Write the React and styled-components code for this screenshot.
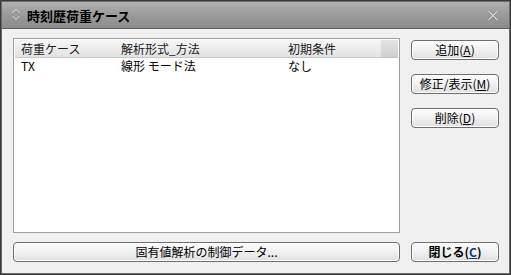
import styled, { createGlobalStyle } from "styled-components"

const GlobalStyle = createGlobalStyle`
    html, body {
        margin: 0;
        padding: 0;
        background: #f0f0f0;
    }
    * {
        box-sizing: border-box;
    }
`

const Window = styled.div`
    width: 511px;
    height: 275px;
    display: flex;
    flex-direction: column;
    background: #f0f0f0;
    border: 1px solid #3a3a3a;
    box-shadow: inset 0 0 0 1px #6a6a6a;
    font-family: "Noto Sans CJK JP", "Liberation Sans", sans-serif;
    font-size: 12px;
    color: #000;
`

const TitleBar = styled.div`
    height: 27px;
    flex-shrink: 0;
    display: flex;
    align-items: center;
    padding: 0 10px 0 9px;
    background: linear-gradient(#b0b0b0 0%, #9c9c9c 45%, #8c8c8c 100%);
    border-bottom: 1px solid #5e5e5e;
    margin: 1px 1px 0 1px;
`

const Title = styled.span`
    font-weight: 700;
    font-size: 13px;
    margin-left: 6px;
    letter-spacing: 0;
    flex: 1;
`

const Body = styled.div`
    flex: 1;
    display: grid;
    grid-template-columns: 387px 88px;
    grid-template-rows: 195px 21px;
    column-gap: 11px;
    row-gap: 9px;
    padding: 9px 10px 0 12px;
`

const ListBox = styled.div`
    background: #fff;
    border: 1px solid #a0a0a0;
    padding: 1px;
    display: flex;
    flex-direction: column;
`

const HeaderRow = styled.div`
    display: grid;
    grid-template-columns: 100px 167px 99px 17px;
    height: 17px;
`

const HeaderCell = styled.div`
    padding-left: 6px;
    line-height: 17px;
    color: #1a1a1a;
    background: ${p => p.$blank
        ? "linear-gradient(#e4e4e4, #cfcfcf)"
        : "linear-gradient(#f6f6f6, #e2e2e2)"};
    border-bottom: 1px solid #c8c8c8;
    white-space: nowrap;
`

const Row = styled.div`
    display: grid;
    grid-template-columns: 100px 167px 99px;
    height: 17px;
`

const Cell = styled.div`
    padding-left: 6px;
    line-height: 17px;
    white-space: nowrap;
`

const ButtonColumn = styled.div`
    display: flex;
    flex-direction: column;
    gap: 14px;
    padding-top: 2px;
`

const Button = styled.button`
    height: 20px;
    width: 100%;
    padding: 0;
    font-family: inherit;
    font-size: 12px;
    font-weight: ${p => (p.$bold ? 700 : 400)};
    color: #000;
    border: 1px solid #6e6e6e;
    border-radius: 4px;
    background: linear-gradient(#fdfdfd 0%, #f0f0f0 50%, #e0e0e0 100%);
    box-shadow: inset 0 0 0 1px #ffffff;
    line-height: 18px;
    u {
        text-decoration: underline;
    }
`

const Key = styled.u`
    color: ${p => (p.$blue ? "#0a3c8c" : "inherit")};
`

function SortIcon() {
    return (
        <svg width="10" height="14" viewBox="0 0 10 14">
            <path d="M1.5 5.5 L5 2 L8.5 5.5" fill="none" stroke="#d0d0d0" strokeWidth="1.6" />
            <path d="M1.5 8.5 L5 12 L8.5 8.5" fill="none" stroke="#d0d0d0" strokeWidth="1.6" />
            <path d="M1.5 6.3 L5 2.8 L8.5 6.3" fill="none" stroke="#6a6a6a" strokeWidth="0.8" />
            <path d="M1.5 9.3 L5 12.8 L8.5 9.3" fill="none" stroke="#6a6a6a" strokeWidth="0.8" />
        </svg>
    )
}

function CloseIcon() {
    return (
        <svg width="12" height="11" viewBox="0 0 12 11">
            <path d="M1.5 1 L10.5 10 M10.5 1 L1.5 10" stroke="#7a7a7a" strokeWidth="2.4" />
            <path d="M1.5 1 L10.5 10 M10.5 1 L1.5 10" stroke="#d8d8d8" strokeWidth="1.2" />
        </svg>
    )
}

export default function App() {
    return (
        <>
            <GlobalStyle />
            <Window>
                <TitleBar>
                    <SortIcon />
                    <Title>時刻歴荷重ケース</Title>
                    <CloseIcon />
                </TitleBar>
                <Body>
                    <ListBox>
                        <HeaderRow>
                            <HeaderCell>荷重ケース</HeaderCell>
                            <HeaderCell>解析形式_方法</HeaderCell>
                            <HeaderCell>初期条件</HeaderCell>
                            <HeaderCell $blank />
                        </HeaderRow>
                        <Row>
                            <Cell>TX</Cell>
                            <Cell>線形 モード法</Cell>
                            <Cell>なし</Cell>
                        </Row>
                    </ListBox>
                    <ButtonColumn>
                        <Button>追加(<Key>A</Key>)</Button>
                        <Button>修正/表示(<Key>M</Key>)</Button>
                        <Button>削除(<Key>D</Key>)</Button>
                    </ButtonColumn>
                    <Button>固有値解析の制御データ...</Button>
                    <Button $bold>閉じる(<Key $blue>C</Key>)</Button>
                </Body>
            </Window>
        </>
    )
}
